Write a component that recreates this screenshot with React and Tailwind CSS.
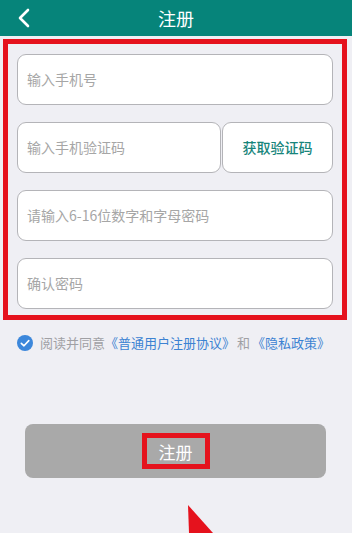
import React from "react";

const font = { fontFamily: '"Noto Sans CJK SC", "Noto Sans", sans-serif' };

function Field({ placeholder, className = "" }) {
  return (
    <div
      className={`h-[51px] bg-white border border-[#b4b4b8] rounded-[9px] flex items-center pl-[9px] text-[14px] text-[#a6a6a6] ${className}`}
    >
      {placeholder}
    </div>
  );
}

export default function App() {
  return (
    <div
      className="relative w-[352px] h-[533px] bg-[#efeff4] overflow-hidden"
      style={font}
    >
      <div className="h-9 bg-[#06847a] relative flex items-center justify-center">
        <svg
          className="absolute left-[17px] top-[8px]"
          width="14"
          height="20"
          viewBox="0 0 14 20"
        >
          <path
            d="M11 2 L3 10 L11 18"
            fill="none"
            stroke="white"
            strokeWidth="2.6"
            strokeLinecap="round"
            strokeLinejoin="round"
          />
        </svg>
        <span className="text-white text-[18px] leading-none">注册</span>
      </div>

      <div className="mt-[3px] ml-[3px] mr-[5px] border-[5px] border-[#e5121d] px-[9px] pt-[10px] pb-[6px] flex flex-col gap-[17px]">
        <Field placeholder="输入手机号" />
        <div className="flex gap-[1px]">
          <Field placeholder="输入手机验证码" className="flex-1" />
          <div className="w-[111px] h-[51px] bg-white border border-[#b4b4b8] rounded-[9px] flex items-center justify-center text-[14px] font-medium text-[#17857b]">
            获取验证码
          </div>
        </div>
        <Field placeholder="请输入6-16位数字和字母密码" />
        <Field placeholder="确认密码" />
      </div>

      <div className="mt-[13px] ml-[17px] flex items-center h-5 text-[13px]">
        <svg width="16" height="16" viewBox="0 0 16 16" className="mr-[7px]">
          <circle cx="8" cy="8" r="8" fill="#3c87db" />
          <path
            d="M4.3 8.3 L7 10.8 L11.8 5.6"
            fill="none"
            stroke="white"
            strokeWidth="1.6"
            strokeLinecap="round"
            strokeLinejoin="round"
          />
        </svg>
        <span className="text-[#a0a0a4]">阅读并同意</span>
        <span className="text-[#3c82d2]">《普通用户注册协议》</span>
        <span className="text-[#a0a0a4] mx-[2px]">和</span>
        <span className="text-[#3c82d2]">《隐私政策》</span>
      </div>

      <div className="mt-[71px] ml-[25px] mr-[26px] h-[54px] bg-[#a9a9a9] rounded-[8px] flex items-center justify-center">
        <div className="w-[68px] h-[36px] border-[5px] border-[#e5121d] flex items-center justify-center text-white text-[17px] leading-none">
          注册
        </div>
      </div>

      <svg
        className="absolute left-0 top-0 pointer-events-none"
        width="352"
        height="533"
        viewBox="0 0 352 533"
      >
        <polygon points="188,505 213,533 189,533" fill="#e5121d" />
      </svg>
    </div>
  );
}
